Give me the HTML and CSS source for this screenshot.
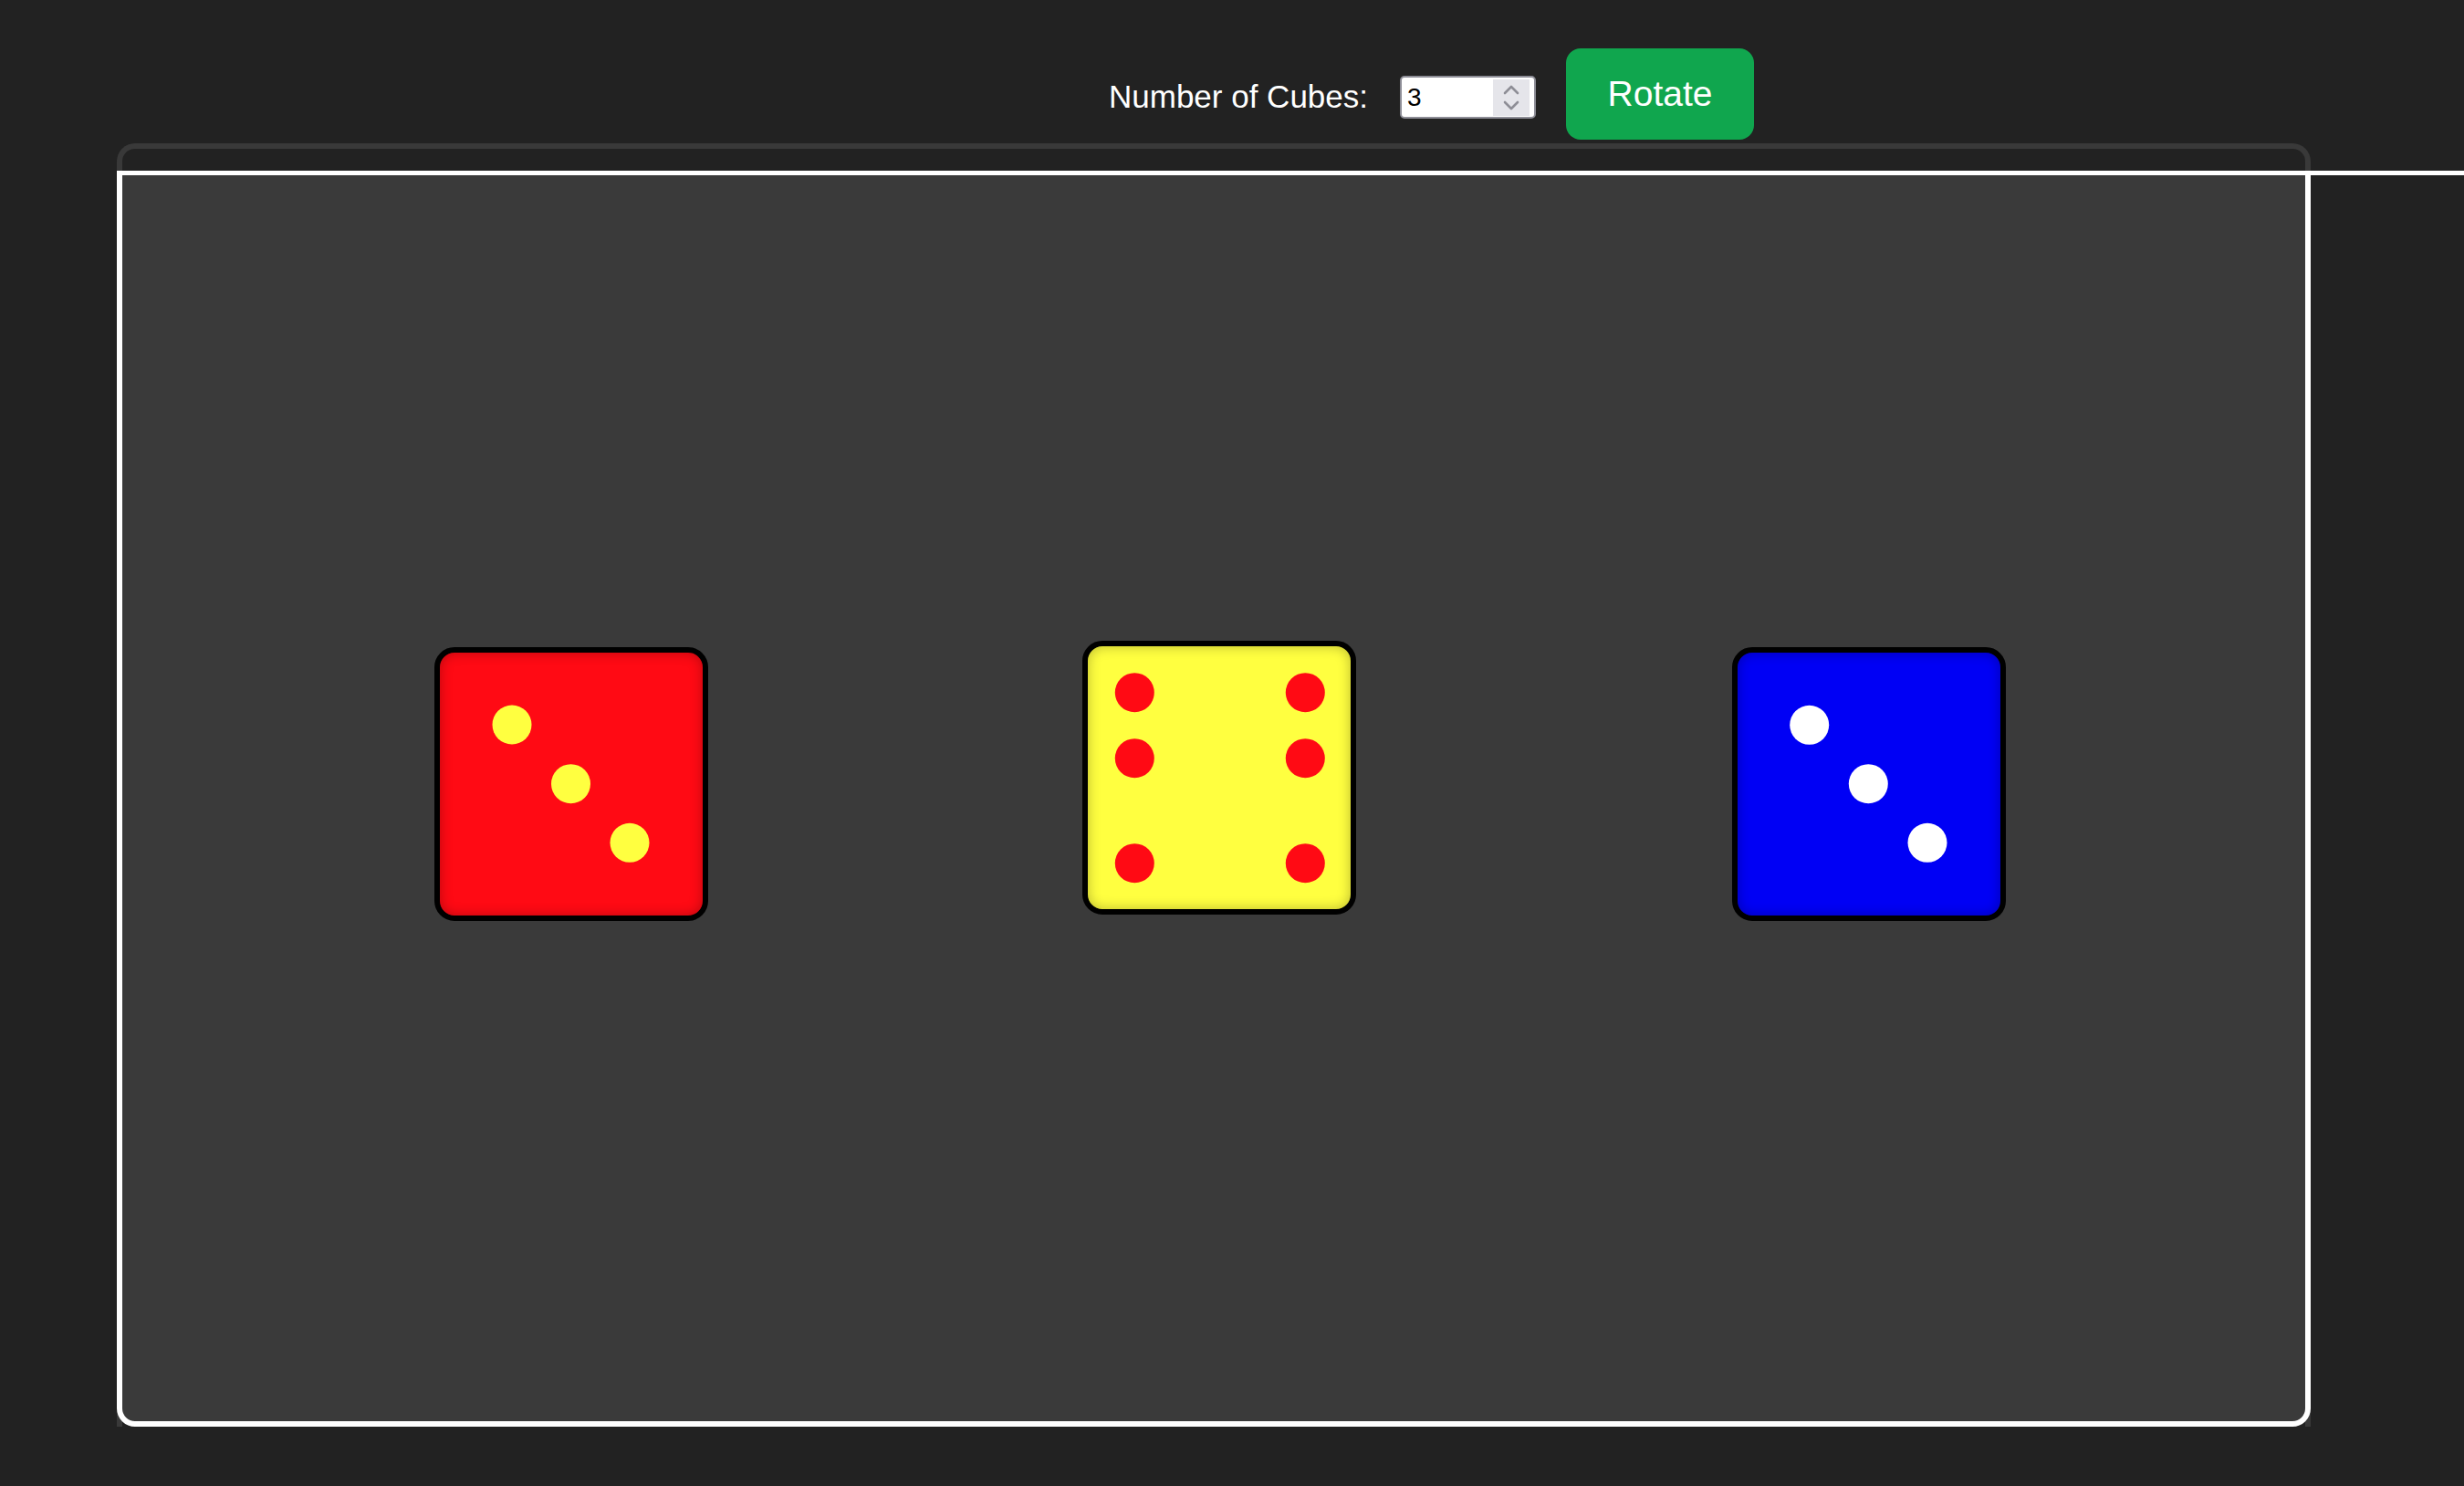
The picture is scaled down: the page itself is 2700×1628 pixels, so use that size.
FILE: index.html
```html
<!DOCTYPE html>
<html lang="en">
<head>
<meta charset="utf-8">
<title>Cubes</title>
<link rel="stylesheet" href="styles.css">
</head>
<body>
  <header class="controls">
    <label class="controls-label" for="count">Number of Cubes:</label>
    <div class="num-input">
      <input id="count" class="num-field" type="text" value="3">
      <span class="spin">
        <svg width="40" height="40" viewBox="0 0 40 40">
          <polyline points="13,15 20,8 27,15" fill="none" stroke="#8e8e96" stroke-width="2.6" stroke-linecap="round" stroke-linejoin="round"/>
          <polyline points="13,25 20,32 27,25" fill="none" stroke="#8e8e96" stroke-width="2.6" stroke-linecap="round" stroke-linejoin="round"/>
        </svg>
      </span>
    </div>
    <button class="rotate-btn" type="button">Rotate</button>
  </header>

  <main class="scene">
    <div class="stage">
      <div class="die die-red">
        <svg class="pips" width="288" height="288" viewBox="0 0 288 288">
          <circle cx="79" cy="79" r="21.5" fill="#ffff40"/>
          <circle cx="143.5" cy="143.7" r="21.5" fill="#ffff40"/>
          <circle cx="208" cy="208.3" r="21.5" fill="#ffff40"/>
        </svg>
      </div>
      <div class="die die-yellow">
        <svg class="pips" width="288" height="288" viewBox="0 0 288 288">
          <circle cx="51.3" cy="50.7" r="21.5" fill="#ff0a14"/>
          <circle cx="238.3" cy="50.7" r="21.5" fill="#ff0a14"/>
          <circle cx="51.3" cy="122.7" r="21.5" fill="#ff0a14"/>
          <circle cx="238.3" cy="122.7" r="21.5" fill="#ff0a14"/>
          <circle cx="51.3" cy="237.7" r="21.5" fill="#ff0a14"/>
          <circle cx="238.3" cy="237.7" r="21.5" fill="#ff0a14"/>
        </svg>
      </div>
      <div class="die die-blue">
        <svg class="pips" width="288" height="288" viewBox="0 0 288 288">
          <circle cx="78.7" cy="79.3" r="21.5" fill="#ffffff"/>
          <circle cx="143.3" cy="143.7" r="21.5" fill="#ffffff"/>
          <circle cx="208" cy="208.3" r="21.5" fill="#ffffff"/>
        </svg>
      </div>
    </div>
  </main>
</body>
</html>
```
FILE: styles.css
```css
html, body {
  margin: 0;
  padding: 0;
}

body {
  background: #222222;
  width: 2700px;
  height: 1628px;
  overflow: hidden;
  font-family: "Liberation Sans", Arial, Helvetica, sans-serif;
  color: #ffffff;
}

.controls {
  display: flex;
  align-items: flex-start;
  height: 100px;
  margin: 53px 0 4px 0;
  padding-left: 1215px;
}

.controls-label {
  font-size: 35px;
  line-height: 40px;
  margin-top: 33px;
  margin-right: 35px;
  white-space: nowrap;
}

.num-input {
  box-sizing: border-box;
  width: 149px;
  height: 47px;
  margin-top: 30px;
  margin-right: 33px;
  border: 2px solid #8d8d96;
  border-radius: 5px;
  background: #ffffff;
  display: flex;
  align-items: center;
}

.num-field {
  flex: 1;
  min-width: 0;
  border: none;
  outline: none;
  background: transparent;
  font-family: "Liberation Sans", Arial, Helvetica, sans-serif;
  font-size: 28px;
  line-height: 32px;
  color: #000000;
  padding: 0 0 0 6px;
  margin: 0;
}

.spin {
  width: 40px;
  height: 40px;
  margin-right: 5px;
  background: #e5e5ea;
  display: flex;
}

.rotate-btn {
  width: 206px;
  height: 100px;
  border: none;
  border-radius: 16px;
  background: #10a64e;
  color: #ffffff;
  font-family: "Liberation Sans", Arial, Helvetica, sans-serif;
  font-size: 39px;
  padding: 0;
  margin: 0;
}

.scene {
  box-sizing: border-box;
  width: 2404px;
  height: 1406px;
  margin-left: 128px;
  border: 6px solid #393939;
  border-bottom: none;
  border-radius: 20px 20px 0 0;
  padding-top: 24px;
}

.stage {
  position: relative;
  box-sizing: border-box;
  height: 1376px;
  margin: 0 -6px;
  background: #3a3a3a;
  border: 6px solid #ffffff;
  border-top-width: 5px;
  border-radius: 0 0 20px 20px;
  display: flex;
  align-items: flex-start;
  padding: 517px 0 0 342px;
  gap: 410px;
}

.stage::after {
  content: "";
  position: absolute;
  top: -5px;
  left: 100%;
  width: 200px;
  height: 5px;
  background: #ffffff;
}

.die {
  box-sizing: border-box;
  width: 300px;
  height: 300px;
  flex: none;
  border: 6px solid #000000;
  border-radius: 22px;
  box-shadow: inset 0 0 14px rgba(0, 0, 0, 0.28);
  overflow: hidden;
}

.pips {
  display: block;
}

.die-red {
  background: #ff0a14;
}

.die-yellow {
  background: #ffff40;
  margin-top: -7px;
}

.die-blue {
  background: #0000f5;
  margin-left: 2px;
}
```
